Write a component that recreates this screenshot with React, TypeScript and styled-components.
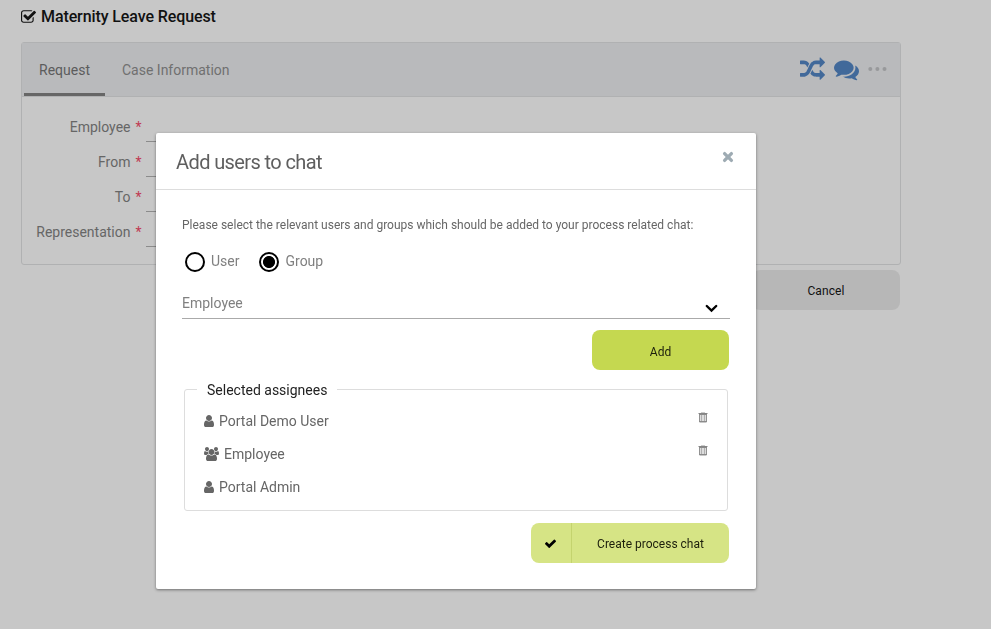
import React from "react";
import styled, { createGlobalStyle } from "styled-components";

const GlobalStyle = createGlobalStyle`
  * { box-sizing: border-box; }
  html, body { margin: 0; height: 100%; }
  body {
    background: #c7c7c7;
    font-family: Roboto, "Liberation Sans", sans-serif;
    font-size: 14px;
    color: #666;
    overflow: hidden;
  }
`;

const Page = styled.main`
  width: 901px;
  height: 629px;
  padding-left: 21px;
`;

const PageTitle = styled.h1`
  display: flex;
  align-items: center;
  gap: 5px;
  height: 34px;
  margin: 0 0 8px;
  font-size: 16px;
  font-weight: 500;
  line-height: 34px;
  letter-spacing: -0.1px;
  color: #111;

  svg { margin-top: -2px; }
`;

const Panel = styled.section`
  width: 880px;
  height: 223px;
  border: 1px solid #b0b1b2;
  border-radius: 3px;
`;

const TabBar = styled.nav`
  display: flex;
  justify-content: space-between;
  height: 54px;
  padding: 0 13px 0 2px;
  background: #b9babc;
  border-bottom: 1px solid #b0b1b2;
`;

const Tabs = styled.div`
  display: flex;
  gap: 2px;
`;

const Tab = styled.button<{ $active?: boolean }>`
  height: 53px;
  padding: 4px 15px 0;
  border: 0;
  border-bottom: 3px solid ${(p) => (p.$active ? "#666" : "transparent")};
  border-radius: 2px 2px 0 0;
  background: none;
  font: 400 14px Roboto, sans-serif;
  color: ${(p) => (p.$active ? "#5c5c5c" : "#707070")};
`;

const PanelTools = styled.div`
  display: flex;
  align-items: center;
  gap: 9px;
  color: #41699a;
`;

const MoreDots = styled.svg`
  margin-top: -1px;
`;

const Form = styled.form`
  padding-top: 13px;
`;

const Field = styled.div`
  display: grid;
  grid-template-columns: 108.5px 15.5px 500px;
  height: 35px;
  line-height: 34px;
`;

const FieldLabel = styled.label`
  text-align: right;
  color: #666;
`;

const Required = styled.span`
  padding-left: 5px;
  color: #c03a52;
`;

const FieldInput = styled.div`
  height: 32px;
  border-bottom: 1px solid #8b8b8b;
`;

const PageActions = styled.div`
  display: flex;
  justify-content: flex-end;
  padding: 5px 1px 0 0;
`;

const CancelButton = styled.button`
  width: 148px;
  height: 40px;
  padding: 2px 0 0;
  border: 0;
  border-radius: 8px;
  background: #b7b7b7;
  font: 400 12px Roboto, sans-serif;
  letter-spacing: 0.1px;
  color: #111;
`;

const Overlay = styled.div`
  position: fixed;
  inset: 0;
  padding: 133px 0 0 156px;
`;

const Dialog = styled.div`
  width: 600px;
  height: 456px;
  border-radius: 2px;
  background: #fff;
  box-shadow: 0 1px 3px rgba(0, 0, 0, 0.45);
`;

const DialogHeader = styled.header`
  display: flex;
  justify-content: space-between;
  height: 57px;
  padding: 0 22px 0 20px;
  border-bottom: 1px solid #ddd;
`;

const DialogTitle = styled.h2`
  margin: 0;
  font-size: 20px;
  font-weight: 400;
  line-height: 58px;
  letter-spacing: -0.6px;
  color: #5f5f5f;
`;

const CloseButton = styled.button`
  display: flex;
  height: 12px;
  margin-top: 18px;
  padding: 0;
  border: 0;
  background: none;
  color: #9eabb3;
`;

const DialogBody = styled.div`
  padding: 27px 26px 0;
`;

const Hint = styled.p`
  margin: 0;
  font-size: 12px;
  line-height: 16px;
  color: #666;
`;

const RadioRow = styled.div`
  display: flex;
  gap: 20px;
  height: 20px;
  margin: 19px 0 0 3px;
`;

const RadioLabel = styled.label`
  display: flex;
  gap: 6px;
  line-height: 18px;
  color: #808080;
`;

const RadioMark = styled.span<{ $checked?: boolean }>`
  width: 20px;
  height: 20px;
  border: 2px solid #000;
  border-radius: 50%;
  background: ${(p) =>
    p.$checked ? "radial-gradient(circle, #000 5.6px, #fff 6.4px)" : "#fff"};
`;

const SelectBox = styled.div`
  display: flex;
  justify-content: space-between;
  width: 548px;
  height: 28px;
  margin-top: 19px;
  padding-right: 12px;
  border-bottom: 1px solid #aaa;
  line-height: 25px;
  color: #808080;

  svg { margin-top: 13px; color: #000; }
`;

const AddButton = styled.button`
  display: block;
  width: 137px;
  height: 40px;
  margin: 11px 1px 0 auto;
  padding: 4px 0 0;
  border: 0;
  border-radius: 8px;
  background: #c5d850;
  font: 400 12px Roboto, sans-serif;
  color: #1c1f0c;
`;

const Assignees = styled.fieldset`
  width: 544px;
  height: 130px;
  margin: 11px 0 0 2px;
  padding: 6px 19px 0;
  border: 1px solid #ddd;
  border-radius: 3px;
`;

const Legend = styled.legend`
  margin-left: -7px;
  padding: 0 10px;
  height: 17px;
  line-height: 18px;
  color: #222;
`;

const Assignee = styled.div`
  display: flex;
  align-items: center;
  height: 33px;
  color: #666;
`;

const AssigneeName = styled.span`
  flex: 1;
  padding-left: 5px;
`;

const DeleteButton = styled.button`
  display: flex;
  padding: 0;
  border: 0;
  margin: -8px 0 0;
  background: none;
`;

const CreateButton = styled.button`
  display: flex;
  align-items: center;
  width: 198px;
  height: 40px;
  margin: 12px 1px 0 auto;
  padding: 0;
  border: 0;
  border-radius: 8px;
  background: #d6e485;
  font: 400 12px Roboto, sans-serif;
  color: #1c1f0c;
`;

const CreateIcon = styled.span`
  display: flex;
  align-items: center;
  justify-content: center;
  width: 41px;
  height: 40px;
  padding-right: 1px;
  border-right: 1px solid #c4d36e;
  color: #000;
`;

const CreateText = styled.span`
  flex: 1;
  padding-top: 2px;
  text-align: center;
`;

const glyphs = {
  checkSquare:
    "M1472 930v318q0 119-84.5 203.5t-203.5 84.5h-832q-119 0-203.5-84.5t-84.5-203.5v-832q0-119 84.5-203.5t203.5-84.5h832q63 0 117 25 15 7 18 23 3 17-9 29l-49 49q-10 10-23 10-3 0-9-2-23-6-45-6h-832q-66 0-113 47t-47 113v832q0 66 47 113t113 47h832q66 0 113-47t47-113v-254q0-13 9-22l64-64q10-10 23-10 6 0 12 3 20 8 20 29zm231-489l-814 814q-24 24-57 24t-57-24l-430-430q-24-24-24-57t24-57l110-110q24-24 57-24t57 24l263 263 647-647q24-24 57-24t57 24l110 110q24 24 24 57t-24 57z",
  random:
    "M666 481q-60 92-137 273-22-45-37-72.5t-40.5-63.5-51-56.5-63-35-81.5-14.5h-224q-14 0-23-9t-9-23v-192q0-14 9-23t23-9h224q250 0 410 225zm1126 799q0 14-9 23l-320 320q-9 9-23 9-13 0-22.5-9.5t-9.5-22.5v-192q-32 0-85 .5t-81 1-73-1-71-5-64-10.5-63-18.5-58-28.5-59-40-55-53.5-56-69.5q59-93 136-273 22 45 37 72.5t40.5 63.5 51 56.5 63 35 81.5 14.5h256v-192q0-14 9-23t23-9q12 0 24 10l319 319q9 9 9 23zm0-896q0 14-9 23l-320 320q-9 9-23 9-13 0-22.5-9.5t-9.5-22.5v-192h-256q-48 0-87 15t-69 45-51 61.5-45 77.5q-32 62-78 171-29 66-49.5 111t-54 105-64 100-74 83-90 68.5-106.5 42-128 16.5h-224q-14 0-23-9t-9-23v-192q0-14 9-23t23-9h224q48 0 87-15t69-45 51-61.5 45-77.5q32-62 78-171 29-66 49.5-111t54-105 64-100 74-83 90-68.5 106.5-42 128-16.5h256v-192q0-14 9-23t23-9q12 0 24 10l319 319q9 9 9 23z",
  comments:
    "M1408 768q0 139-94 257t-256.5 186.5-353.5 68.5q-86 0-176-16-124 88-278 128-36 9-86 16h-3q-11 0-20.5-8t-11.5-21q-1-3-1-6.5t.5-6.5 2-6l2.5-5 3.5-5.5 4-5 4.5-5 4-4.5q5-6 23-25t26-29.5 22.5-29 25-38.5 20.5-44q-124-72-195-177t-71-224q0-139 94-257t256.5-186.5 353.5-68.5 353.5 68.5 256.5 186.5 94 257zm384 256q0 120-71 224.5t-195 176.5q10 24 20.5 44t25 38.5 22.5 29 26 29.5 23 25q1 1 4 4.5t4.5 5 4 5 3.5 5.5l2.5 5 2 6 .5 6.5-1 6.5q-3 14-13 22t-22 7q-50-7-86-16-154-40-278-128-90 16-176 16-271 0-472-132 58 4 88 4 161 0 309-45t264-129q125-92 192-212t67-254q0-77-23-152 129 71 204 178t75 230z",
  user:
    "M1536 1399q0 109-62.5 187t-150.5 78h-854q-88 0-150.5-78t-62.5-187q0-85 8.5-160.5t31.5-152 58.5-131 94-89 134.5-34.5q131 128 313 128t313-128q76 0 134.5 34.5t94 89 58.5 131 31.5 152 8.5 160.5zm-256-887q0 159-112.5 271.5t-271.5 112.5-271.5-112.5-112.5-271.5 112.5-271.5 271.5-112.5 271.5 112.5 112.5 271.5z",
  users:
    "M593 896q-162 5-265 128h-134q-82 0-138-40.5t-56-118.5q0-353 124-353 6 0 43.5 21t97.5 42.5 119 21.5q67 0 133-23-5 37-5 66 0 139 81 256zm1071 637q0 120-73 189.5t-194 69.5h-874q-121 0-194-69.5t-73-189.5q0-53 3.5-103.5t14-109 26.5-108.5 43-97.5 62-81 85.5-53.5 111.5-20q10 0 43 21.5t73 48 107 48 135 21.5 135-21.5 107-48 73-48 43-21.5q61 0 111.5 20t85.5 53.5 62 81 43 97.5 26.5 108.5 14 109 3.5 103.5zm-1024-1277q0 106-75 181t-181 75-181-75-75-181 75-181 181-75 181 75 75 181zm704 384q0 159-112.5 271.5t-271.5 112.5-271.5-112.5-112.5-271.5 112.5-271.5 271.5-112.5 271.5 112.5 112.5 271.5zm576 225q0 78-56 118.5t-138 40.5h-134q-103-123-265-128 81-117 81-256 0-29-5-66 66 23 133 23 59 0 119-21.5t97.5-42.5 43.5-21q124 0 124 353zm-128-609q0 106-75 181t-181 75-181-75-75-181 75-181 181-75 181 75 75 181z",
  check:
    "M1671 566q0 40-28 68l-724 724-136 136q-28 28-68 28t-68-28l-136-136-362-362q-28-28-28-68t28-68l136-136q28-28 68-28t68 28l294 295 656-657q28-28 68-28t68 28l136 136q28 28 28 68z",
};

interface GlyphProps {
  name: keyof typeof glyphs;
  width: number;
  height: number;
  box: string;
}

const Glyph = ({ name, width, height, box }: GlyphProps) => (
  <svg width={width} height={height} viewBox={box} fill="currentColor">
    <path d={glyphs[name]} />
  </svg>
);

const TrashIcon = () => (
  <svg width="10" height="12" viewBox="0 0 10 12" fill="none">
    <path d="M3 1.5h4" stroke="#ccc" />
    <path d="M.5 2.5h9" stroke="#858585" />
    <path d="M1.5 3v8h7V3" fill="#ddd" stroke="#929292" />
    <path d="M3.5 4v6M6.5 4v6" stroke="#b0b0b0" />
    <path d="M1 10.5h8M1 3.5h8" stroke="#8b8b8b" />
  </svg>
);

const fields = ["Employee", "From", "To", "Representation"];

const assignees = [
  { name: "Portal Demo User", group: false, removable: true },
  { name: "Employee", group: true, removable: true },
  { name: "Portal Admin", group: false, removable: false },
];

export default function App() {
  return (
    <>
      <GlobalStyle />
      <Page>
        <PageTitle>
          <Glyph name="checkSquare" width={15} height={13} box="64 128 1664 1408" />
          Maternity Leave Request
        </PageTitle>
        <Panel>
          <TabBar>
            <Tabs>
              <Tab $active>Request</Tab>
              <Tab>Case Information</Tab>
            </Tabs>
            <PanelTools>
              <Glyph name="random" width={25} height={25} box="0 0 1792 1792" />
              <Glyph name="comments" width={25} height={25} box="0 0 1792 1792" />
              <MoreDots width="19" height="6" viewBox="0 0 19 6" fill="#98999b">
                <circle cx="2.3" cy="3" r="2" />
                <circle cx="9.4" cy="3" r="2" />
                <circle cx="16.5" cy="3" r="2" />
              </MoreDots>
            </PanelTools>
          </TabBar>
          <Form>
            {fields.map((label) => (
              <Field key={label}>
                <FieldLabel>{label}</FieldLabel>
                <Required>*</Required>
                <FieldInput />
              </Field>
            ))}
          </Form>
        </Panel>
        <PageActions>
          <CancelButton>Cancel</CancelButton>
        </PageActions>
      </Page>

      <Overlay>
        <Dialog role="dialog">
          <DialogHeader>
            <DialogTitle>Add users to chat</DialogTitle>
            <CloseButton aria-label="Close">
              <svg width="12" height="12" viewBox="0 0 12 12" stroke="currentColor" strokeWidth="3.3" strokeLinecap="round">
                <path d="M2.6 2.6l6.8 6.8M9.4 2.6L2.6 9.4" />
              </svg>
            </CloseButton>
          </DialogHeader>
          <DialogBody>
            <Hint>
              Please select the relevant users and groups which should be added to your process related chat:
            </Hint>
            <RadioRow>
              <RadioLabel>
                <RadioMark />
                User
              </RadioLabel>
              <RadioLabel>
                <RadioMark $checked />
                Group
              </RadioLabel>
            </RadioRow>
            <SelectBox>
              Employee
              <svg width="13" height="9" viewBox="0 0 13 9" fill="none" stroke="currentColor" strokeWidth="2.4" strokeLinecap="round">
                <path d="M1.8 2l4.7 4.6L11.2 2" />
              </svg>
            </SelectBox>
            <AddButton>Add</AddButton>
            <Assignees>
              <Legend>Selected assignees</Legend>
              {assignees.map((a) => (
                <Assignee key={a.name}>
                  {a.group ? (
                    <Glyph name="users" width={15} height={14} box="0 0 1920 1792" />
                  ) : (
                    <Glyph name="user" width={10} height={12} box="256 128 1280 1536" />
                  )}
                  <AssigneeName>{a.name}</AssigneeName>
                  {a.removable && (
                    <DeleteButton aria-label="Remove">
                      <TrashIcon />
                    </DeleteButton>
                  )}
                </Assignee>
              ))}
            </Assignees>
            <CreateButton>
              <CreateIcon>
                <Glyph name="check" width={11} height={9} box="121 270 1550 1252" />
              </CreateIcon>
              <CreateText>Create process chat</CreateText>
            </CreateButton>
          </DialogBody>
        </Dialog>
      </Overlay>
    </>
  );
}
